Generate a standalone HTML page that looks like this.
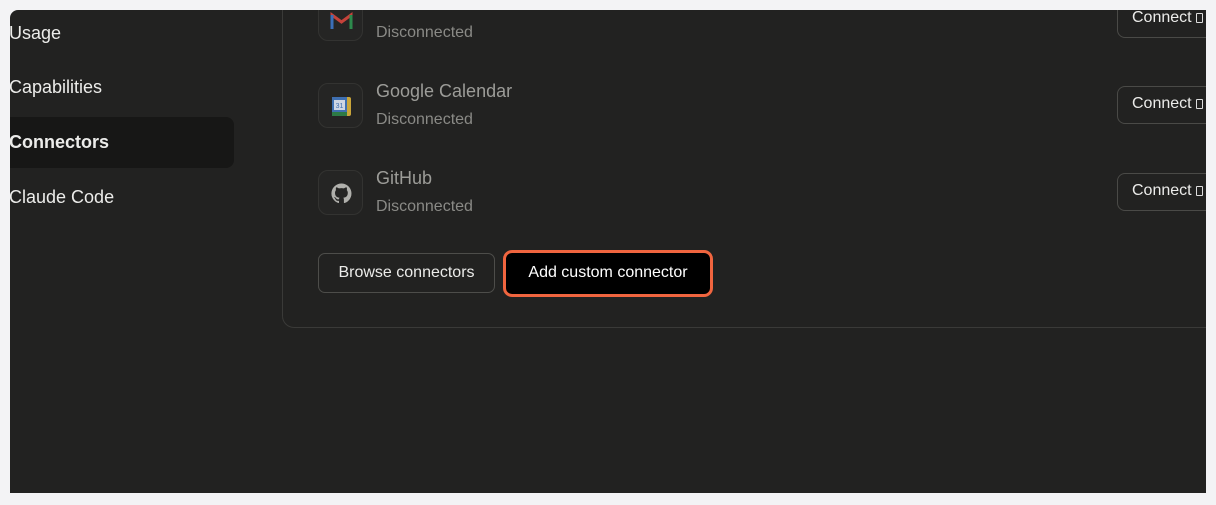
<!DOCTYPE html>
<html><head><style>
*{margin:0;padding:0;box-sizing:border-box}
body{width:1216px;height:505px;background:#f3f3f5;position:relative;overflow:hidden;font-family:"Liberation Sans",sans-serif}
.app{position:absolute;left:10px;top:10px;width:1196px;height:483px;background:#222221;border-radius:8px 0 0 0;overflow:hidden}
.nav{position:absolute;left:-1px;font-size:18px;color:#ececea}
.sel{position:absolute;left:0;top:107px;width:224px;height:51px;background:#171716;border-radius:0 8px 8px 0}
.card{position:absolute;left:272px;top:-20px;width:1000px;height:338px;border:1px solid #3a3a38;border-radius:12px}
.ic{position:absolute;left:308px;width:45px;height:45px;border:1px solid #333331;border-radius:10px;background:#252524}
.t{position:absolute;left:366px;font-size:18px;color:#9c9c98}
.s{position:absolute;left:366px;font-size:16px;color:#8a8a86}
.cb{position:absolute;left:1107px;width:100px;height:38px;border:1px solid #4a4a47;border-radius:8px;color:#ececea;font-size:16px;padding:8px 0 0 14px}
.cb i{display:inline-block;width:7px;height:10px;border:1.5px solid #ddd;border-radius:1px;margin-left:4px;vertical-align:-1px}
.b1{position:absolute;left:308px;top:243px;width:177px;height:40px;border:1px solid #4d4d4a;border-radius:7px;color:#ececea;font-size:16px;text-align:center;line-height:38px}
.b2{position:absolute;left:493px;top:240px;width:210px;height:47px;border:3px solid #f0653f;border-radius:9px;background:#000;color:#fff;font-size:16px;text-align:center;line-height:40px}
</style></head><body>
<div class="app">
<div class="sel"></div>
<div class="nav" style="top:13px">Usage</div>
<div class="nav" style="top:67px">Capabilities</div>
<div class="nav" style="top:122px;font-weight:bold">Connectors</div>
<div class="nav" style="top:177px">Claude Code</div>
<div class="card"></div>

<div class="ic" style="top:-14px"><svg width="45" height="45" viewBox="0 0 45 45"><path d="M13 32V18l9.5 7 9.5-7v14" fill="none" stroke="#c5423a" stroke-width="3"/><path d="M13 18v14" stroke="#3b6fb8" stroke-width="3"/><path d="M32 18v14" stroke="#2d8a4c" stroke-width="3"/></svg></div>
<div class="s" style="top:14px">Disconnected</div>
<div class="cb" style="top:-10px">Connect<i></i></div>

<div class="ic" style="top:73px"><svg width="45" height="45" viewBox="0 0 45 45"><rect x="13" y="13" width="19" height="19" rx="2" fill="#c9a53a"/><rect x="13" y="13" width="15" height="15" fill="#3f6fb0"/><rect x="13" y="28" width="15" height="4" fill="#2d7a45"/><rect x="15" y="16" width="11" height="10" fill="#cfd6e4"/><text x="20.5" y="24" font-size="7" text-anchor="middle" fill="#3f6fb0" font-family="Liberation Sans">31</text></svg></div>
<div class="t" style="top:71px">Google Calendar</div>
<div class="s" style="top:101px">Disconnected</div>
<div class="cb" style="top:76px">Connect<i></i></div>

<div class="ic" style="top:160px"><svg width="45" height="45" viewBox="0 0 45 45"><path d="M22.5 12.5a10 10 0 0 0-3.2 19.5c.5.1.7-.2.7-.5v-1.8c-2.8.6-3.4-1.3-3.4-1.3-.5-1.2-1.1-1.5-1.1-1.5-.9-.6.1-.6.1-.6 1 .1 1.5 1 1.5 1 .9 1.5 2.3 1.1 2.9.8.1-.6.3-1.1.6-1.3-2.2-.3-4.6-1.1-4.6-5 0-1.1.4-2 1-2.7-.1-.3-.4-1.3.1-2.7 0 0 .8-.3 2.8 1a9.6 9.6 0 0 1 5 0c1.9-1.3 2.8-1 2.8-1 .5 1.4.2 2.4.1 2.7.6.7 1 1.6 1 2.7 0 3.9-2.3 4.7-4.6 5 .4.3.7.9.7 1.9v2.8c0 .3.2.6.7.5a10 10 0 0 0-3.1-19.5z" fill="#b0b0ac"/></svg></div>
<div class="t" style="top:158px">GitHub</div>
<div class="s" style="top:188px">Disconnected</div>
<div class="cb" style="top:163px">Connect<i></i></div>

<div class="b1">Browse connectors</div>
<div class="b2">Add custom connector</div>
</div>
</body></html>
